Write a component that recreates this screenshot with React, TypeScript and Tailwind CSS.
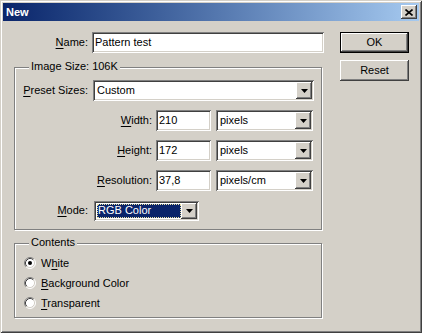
import React from 'react'

const sunken =
    'shadow-[inset_1px_1px_#808080,inset_-1px_-1px_#ffffff,inset_2px_2px_#404040,inset_-2px_-2px_#d4d0c8]'
const raised =
    'shadow-[inset_-1px_-1px_#404040,inset_1px_1px_#ffffff,inset_-2px_-2px_#808080,inset_2px_2px_#d4d0c8]'

const Key = ({ children }: { children: React.ReactNode }) => (
    <span className="underline underline-offset-[2px]">{children}</span>
)

const Arrow = () => (
    <svg width="7" height="4" viewBox="0 0 7 4">
        <path d="M0 0h7L3.5 4z" fill="#000" />
    </svg>
)

const DropButton = () => (
    <div
        className={`w-[16px] h-[17px] bg-[#d4d0c8] flex items-center justify-center ${raised}`}
    >
        <Arrow />
    </div>
)

const TextBox = ({ value, w }: { value: string; w: string }) => (
    <div
        className={`${w} h-[21px] bg-white flex items-center pl-[3px] ${sunken}`}
    >
        {value}
    </div>
)

const Select = ({ value, w }: { value: string; w: string }) => (
    <div
        className={`${w} h-[21px] bg-white flex items-center justify-between pl-[4px] pr-[2px] ${sunken}`}
    >
        <span>{value}</span>
        <DropButton />
    </div>
)

const Radio = ({ checked }: { checked?: boolean }) => (
    <svg width="12" height="12" viewBox="0 0 12 12">
        <circle cx="6" cy="6" r="5" fill="#fff" />
        <path d="M2.11 9.89A5.5 5.5 0 0 1 9.89 2.11" stroke="#808080" fill="none" />
        <path d="M9.89 2.11A5.5 5.5 0 0 1 2.11 9.89" stroke="#fff" fill="none" />
        <path d="M2.82 9.18A4.5 4.5 0 0 1 9.18 2.82" stroke="#404040" fill="none" />
        <path d="M9.18 2.82A4.5 4.5 0 0 1 2.82 9.18" stroke="#d4d0c8" fill="none" />
        {checked && <circle cx="6" cy="6" r="2" fill="#000" />}
    </svg>
)

const Group = ({
    title,
    className,
    children,
}: {
    title: string
    className: string
    children: React.ReactNode
}) => (
    <div
        className={`relative w-[308px] border border-[#808080] shadow-[inset_1px_1px_#ffffff,1px_1px_#ffffff] ${className}`}
    >
        <span className="absolute left-[14px] top-[-8px] px-[2px] leading-[13px] bg-[#d4d0c8]">
            {title}
        </span>
        {children}
    </div>
)

const App = () => {
    return (
        <div
            className="w-[422px] h-[333px] bg-[#d4d0c8] flex flex-col text-[11px] text-black shadow-[inset_1px_1px_#d4d0c8,inset_-1px_-1px_#404040,inset_2px_2px_#ffffff,inset_-2px_-2px_#808080]"
            style={{ fontFamily: '"Liberation Sans", Arial, sans-serif' }}
        >
            <div className="mx-[3px] mt-[3px] h-[18px] flex items-center justify-between pl-[3px] pr-[2px] bg-linear-to-r from-[#0a246a] to-[#a6caf0]">
                <span className="text-white font-bold">New</span>
                <div
                    className={`w-[16px] h-[14px] bg-[#d4d0c8] flex items-center justify-center ${raised}`}
                >
                    <svg width="8" height="7" viewBox="0 0 8 7">
                        <path
                            d="M0.5 0.5L7.5 6.5M7.5 0.5L0.5 6.5"
                            stroke="#000"
                            strokeWidth="1.6"
                        />
                    </svg>
                </div>
            </div>

            <div className="flex pl-[14px] pt-[11px]">
                <div className="w-[310px] flex flex-col">
                    <div className="h-[21px] flex items-center">
                        <span className="w-[74px] text-right">
                            <Key>N</Key>ame:
                        </span>
                        <div className="ml-[4px]">
                            <TextBox value="Pattern test" w="w-[232px]" />
                        </div>
                    </div>

                    <Group title="Image Size: 106K" className="mt-[14px] h-[163px]">
                        <div className="pt-[12px] flex flex-col gap-[9px]">
                            <div className="h-[21px] flex items-center">
                                <span className="w-[73px] text-right">
                                    <Key>P</Key>reset Sizes:
                                </span>
                                <div className="ml-[5px]">
                                    <Select value="Custom" w="w-[221px]" />
                                </div>
                            </div>
                            {[
                                { k: 'W', rest: 'idth:', v: '210', u: 'pixels' },
                                { k: 'H', rest: 'eight:', v: '172', u: 'pixels' },
                                { k: 'R', rest: 'esolution:', v: '37,8', u: 'pixels/cm' },
                            ].map(row => (
                                <div key={row.k} className="h-[21px] flex items-center">
                                    <span className="w-[137px] text-right">
                                        <Key>{row.k}</Key>
                                        {row.rest}
                                    </span>
                                    <div className="ml-[4px]">
                                        <TextBox value={row.v} w="w-[55px]" />
                                    </div>
                                    <div className="ml-[5px]">
                                        <Select value={row.u} w="w-[97px]" />
                                    </div>
                                </div>
                            ))}
                            <div className="h-[21px] flex items-center">
                                <span className="w-[73px] text-right">
                                    <Key>M</Key>ode:
                                </span>
                                <div
                                    className={`ml-[6px] w-[105px] h-[20px] bg-white flex items-center justify-between pl-[3px] pr-[2px] ${sunken}`}
                                >
                                    <span className="w-[84px] h-[14px] flex items-center pl-[1px] bg-[#0a246a] text-white outline-1 outline-dotted outline-[#e8e0a0] -outline-offset-1">
                                        RGB Color
                                    </span>
                                    <div
                                        className={`w-[16px] h-[16px] bg-[#d4d0c8] flex items-center justify-center ${raised}`}
                                    >
                                        <Arrow />
                                    </div>
                                </div>
                            </div>
                        </div>
                    </Group>

                    <Group title="Contents" className="mt-[13px] h-[75px]">
                        <div className="pt-[9px] pl-[9px] flex flex-col">
                            {[
                                { label: <>W<Key>h</Key>ite</>, checked: true },
                                { label: <><Key>B</Key>ackground Color</> },
                                { label: <><Key>T</Key>ransparent</> },
                            ].map((r, i) => (
                                <div key={i} className="h-[20px] flex items-center">
                                    <Radio checked={r.checked} />
                                    <span className="ml-[5px]">{r.label}</span>
                                </div>
                            ))}
                        </div>
                    </Group>
                </div>

                <div className="ml-[16px] flex flex-col">
                    <div
                        className={`w-[69px] h-[21px] border border-black flex items-center justify-center bg-[#d4d0c8] ${raised}`}
                    >
                        OK
                    </div>
                    <div
                        className={`mt-[7px] w-[69px] h-[21px] flex items-center justify-center bg-[#d4d0c8] ${raised}`}
                    >
                        Reset
                    </div>
                </div>
            </div>
        </div>
    )
}

export default App
